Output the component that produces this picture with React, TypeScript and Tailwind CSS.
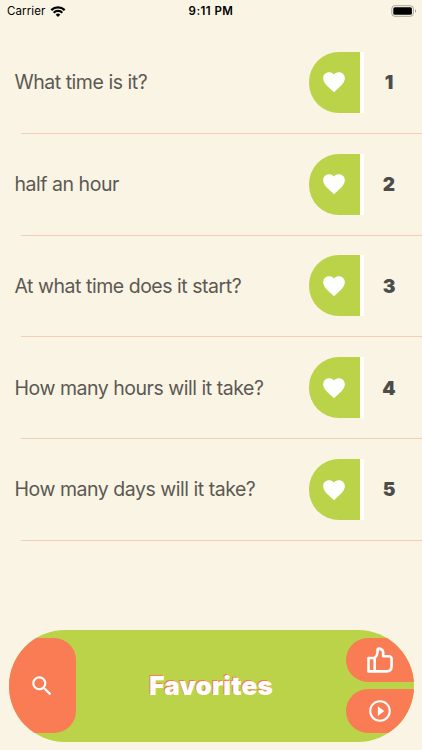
import React from 'react';
import { MdFavorite, MdPlayCircleOutline, MdSearch } from 'react-icons/md';

interface Phrase {
  id: number;
  text: string;
}

const phrases: Phrase[] = [
  { id: 1, text: 'What time is it?' },
  { id: 2, text: 'half an hour' },
  { id: 3, text: 'At what time does it start?' },
  { id: 4, text: 'How many hours will it take?' },
  { id: 5, text: 'How many days will it take?' },
];

const StatusBar: React.FC = () => (
  <div className="grid h-[22px] grid-cols-3 items-center px-[5px] text-[11.5px] text-black">
    <div className="flex items-center gap-[5px] pl-[2px]">
      <span className="pt-px tracking-[0.1px]">Carrier</span>
      <svg width="16" height="11" viewBox="0 0 15 11" fill="none" stroke="black" strokeWidth="2.2">
        <path d="M0.8 4.1a9.6 9.6 0 0 1 13.4 0" />
        <path d="M3.2 6.7a6.1 6.1 0 0 1 8.6 0" />
        <path d="M7.5 11L5.2 8.7a3.3 3.3 0 0 1 4.6 0z" fill="black" stroke="none" />
      </svg>
    </div>
    <span className="pt-px text-center font-semibold tracking-[0.45px]">9:11 PM</span>
    <svg className="justify-self-end" width="26" height="12" viewBox="0 0 26 12">
      <rect x="0.8" y="0.7" width="21.6" height="10.6" rx="3" fill="none" stroke="#a9a59b" />
      <rect x="2.3" y="2.2" width="18.6" height="7.6" rx="1.6" fill="black" />
      <path d="M24 4.2c1.5.6 1.5 3 0 3.6z" fill="#a9a59b" />
    </svg>
  </div>
);

const PhraseRow: React.FC<{ phrase: Phrase }> = ({ phrase }) => (
  <li>
    <div className="flex h-[100.8px] items-center pl-[14.5px]">
      <span className="flex-1 pt-px text-[19.5px] whitespace-nowrap tracking-[-0.47px] text-[#5b5953]">
        {phrase.text}
      </span>
      <button className="flex h-[61px] w-[55px] items-center rounded-l-[30px] border-r-4 border-white bg-[#bad348] pl-[11.5px]">
        <MdFavorite size={26} className="text-white" />
      </button>
      <span className="w-[58px] pt-[2px] pr-[8px] text-center text-[19px] font-black text-[#4c4c4a]">{phrase.id}</span>
    </div>
    <div className="ml-[21px] h-px bg-[#f6cdb9]" />
  </li>
);

const ThumbIcon: React.FC = () => (
  <svg width="26" height="26" viewBox="0 0 26 26" fill="none" stroke="white" strokeWidth="2.6" strokeLinejoin="round">
    <path d="M1.5 11H7.7V24.4H1.5z" />
    <path d="M7.7 11C9.4 9.6 10.4 7.6 10.6 5V2.6C10.6 1.8 11.2 1.5 12 1.6C14.6 1.9 16.2 3.4 16.2 5.8V9.3H21.6C23.5 9.3 24.6 10.3 24.6 12V18.7C24.6 22.3 22.7 24.4 19.7 24.4H7.7" />
  </svg>
);

const BottomBar: React.FC = () => (
  <nav className="mx-[8.5px] mb-[8.5px] flex h-[112px] items-center overflow-hidden rounded-[56px] bg-[#bad348]">
    <button className="flex h-[95.5px] w-[67.5px] items-center rounded-r-[22px] bg-[#f97c55] pl-[20px]">
      <MdSearch size={26} className="text-white" />
    </button>
    <h1 className="flex-1 text-center text-[26px] font-black tracking-[0.15px] text-white [text-shadow:-1px_-1px_0_#f97c55]">
      Favorites
    </h1>
    <div className="flex w-[67.5px] flex-col gap-[6.5px]">
      <button className="flex h-[44.5px] items-center rounded-l-[22px] bg-[#f97c55] pl-[20.5px]">
        <ThumbIcon />
      </button>
      <button className="flex h-[44.5px] items-center rounded-l-[22px] bg-[#f97c55] pl-[20.5px]">
        <MdPlayCircleOutline size={26} className="text-white" />
      </button>
    </div>
  </nav>
);

const App: React.FC = () => {
  return (
    <div className="flex h-[750px] w-[422px] flex-col overflow-hidden bg-[#faf4e4] font-['Inter',sans-serif]">
      <StatusBar />
      <ul className="flex-1 pt-[10px]">
        {phrases.map((phrase) => (
          <PhraseRow key={phrase.id} phrase={phrase} />
        ))}
      </ul>
      <BottomBar />
    </div>
  );
};

export default App;
